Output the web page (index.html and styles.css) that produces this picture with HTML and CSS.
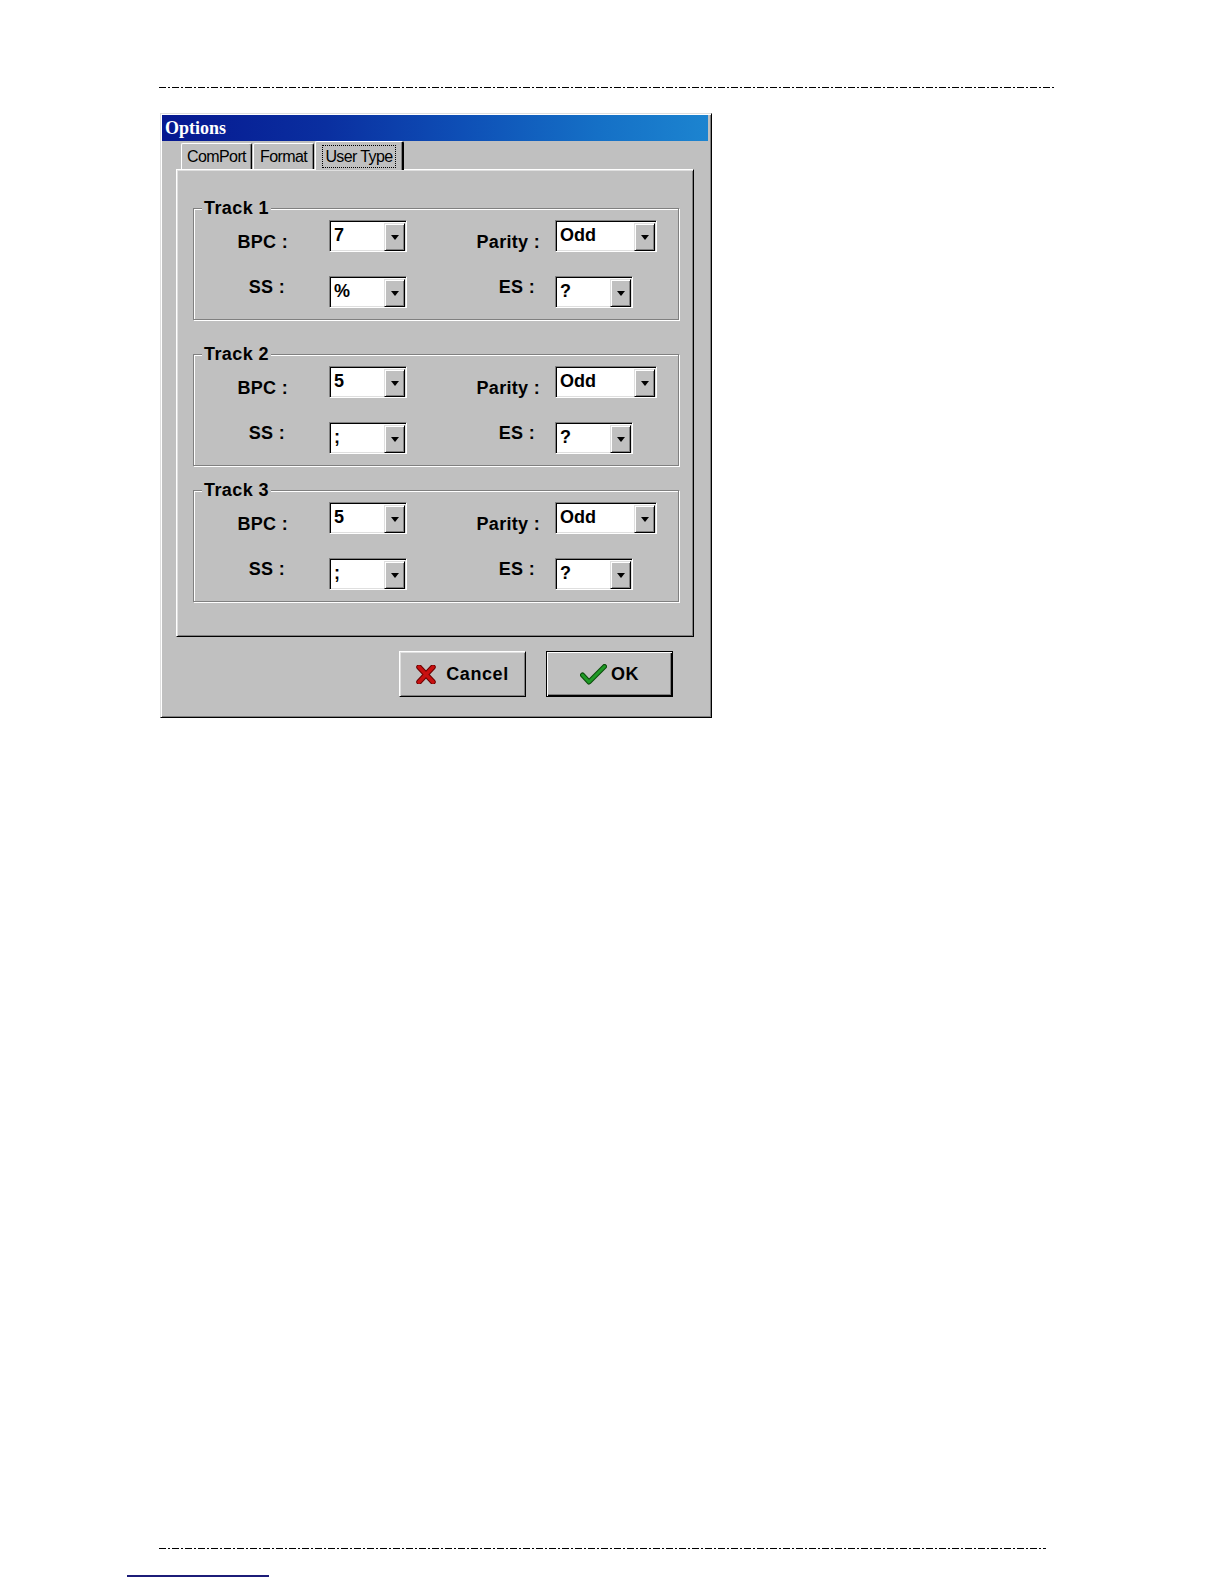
FILE: index.html
```html
<!DOCTYPE html>
<html>
<head>
<meta charset="utf-8">
<title>Options</title>
<link rel="stylesheet" href="styles.css">
</head>
<body>
<div class="page">
  <div class="rule rule-top"></div>

  <div class="dialog">
    <div class="titlebar">Options</div>

    <div class="tabs">
      <div class="tab tab-comport">ComPort</div>
      <div class="tab tab-format">Format</div>
      <div class="tab tab-user active"><span class="focus">User Type</span></div>
    </div>

    <div class="panel">
      <div class="group g1">
        <span class="legend">Track 1</span>
        <div class="fields">
          <div class="lbl lbl-a r1">BPC :</div>
          <div class="combo"><span class="val">7</span><span class="drop"><span class="arrow"></span></span></div>
          <div class="lbl lbl-b r1">Parity :</div>
          <div class="combo wide"><span class="val">Odd</span><span class="drop"><span class="arrow"></span></span></div>
          <div class="lbl lbl-a r2 ss">SS :</div>
          <div class="combo"><span class="val">%</span><span class="drop"><span class="arrow"></span></span></div>
          <div class="lbl lbl-b r2 es">ES :</div>
          <div class="combo"><span class="val">?</span><span class="drop"><span class="arrow"></span></span></div>
        </div>
      </div>

      <div class="group g2">
        <span class="legend">Track 2</span>
        <div class="fields">
          <div class="lbl lbl-a r1">BPC :</div>
          <div class="combo"><span class="val">5</span><span class="drop"><span class="arrow"></span></span></div>
          <div class="lbl lbl-b r1">Parity :</div>
          <div class="combo wide"><span class="val">Odd</span><span class="drop"><span class="arrow"></span></span></div>
          <div class="lbl lbl-a r2 ss">SS :</div>
          <div class="combo"><span class="val">;</span><span class="drop"><span class="arrow"></span></span></div>
          <div class="lbl lbl-b r2 es">ES :</div>
          <div class="combo"><span class="val">?</span><span class="drop"><span class="arrow"></span></span></div>
        </div>
      </div>

      <div class="group g3">
        <span class="legend">Track 3</span>
        <div class="fields">
          <div class="lbl lbl-a r1">BPC :</div>
          <div class="combo"><span class="val">5</span><span class="drop"><span class="arrow"></span></span></div>
          <div class="lbl lbl-b r1">Parity :</div>
          <div class="combo wide"><span class="val">Odd</span><span class="drop"><span class="arrow"></span></span></div>
          <div class="lbl lbl-a r2 ss">SS :</div>
          <div class="combo"><span class="val">;</span><span class="drop"><span class="arrow"></span></span></div>
          <div class="lbl lbl-b r2 es">ES :</div>
          <div class="combo"><span class="val">?</span><span class="drop"><span class="arrow"></span></span></div>
        </div>
      </div>
    </div>

    <div class="buttons">
      <div class="btn btn-cancel">
        <svg class="ico-x" width="20" height="19" viewBox="0 0 20 19">
          <path d="M3 2 L17 17 M17 2 L3 17" stroke="#6a0000" stroke-width="5.5" stroke-linecap="round"/>
          <path d="M3 2 L17 17 M17 2 L3 17" stroke="#c81010" stroke-width="3.5" stroke-linecap="round"/>
        </svg>
        <span>Cancel</span>
      </div>
      <div class="btn btn-ok">
        <svg class="ico-ok" width="27" height="21" viewBox="0 0 27 21">
          <path d="M2.5 11 L9 18 L24.5 2.5" fill="none" stroke="#0b4a0b" stroke-width="5" stroke-linecap="round" stroke-linejoin="round"/>
          <path d="M2.5 11 L9 18 L24.5 2.5" fill="none" stroke="#1f9a26" stroke-width="3" stroke-linecap="round" stroke-linejoin="round"/>
        </svg>
        <span>OK</span>
      </div>
    </div>
  </div>

  <div class="rule rule-bottom"></div>
  <div class="blueline"></div>
</div>
</body>
</html>
```

FILE: styles.css
```css
* { box-sizing: border-box; }

html, body {
  margin: 0;
  padding: 0;
  background: #ffffff;
}

body {
  font-family: "Liberation Sans", Arial, sans-serif;
  color: #000;
}

.page {
  width: 1224px;
  height: 1584px;
  padding-top: 87px;
  overflow: hidden;
}

.rule {
  height: 1px;
  margin-left: 159px;
  background: repeating-linear-gradient(to right,
    #000 0 7px, transparent 7px 9px, #000 9px 11px, transparent 11px 13px);
}

.rule-top { width: 896px; }

.rule-bottom {
  width: 887px;
  margin-top: 830px;
}

.blueline {
  width: 142px;
  height: 2px;
  margin: 26px 0 0 127px;
  background: #1c1c78;
}

/* dialog window */
.dialog {
  width: 552px;
  height: 605px;
  margin: 25px 0 0 160px;
  background: #c0c0c0;
  border: 1px solid;
  border-color: #dfdfdf #000 #000 #dfdfdf;
  box-shadow: inset 1px 1px #ffffff, inset -1px -1px #808080;
  padding: 1px 3px 0 1px;
}

.titlebar {
  height: 26px;
  padding-left: 3px;
  font-family: "Liberation Serif", "Times New Roman", serif;
  font-weight: bold;
  font-size: 18px;
  line-height: 26px;
  color: #fff;
  background: linear-gradient(to right, #061890 0%, #0a2fa0 30%, #0e4fb6 55%, #1570c6 80%, #1c84d0 100%);
}

/* tabs */
.tabs {
  display: flex;
  align-items: flex-end;
  height: 28px;
  padding-left: 19px;
  position: relative;
  z-index: 2;
}

.tab {
  height: 26px;
  border: 1px solid;
  border-color: #fff #000 transparent #fff;
  border-bottom: none;
  border-radius: 2px 2px 0 0;
  box-shadow: inset -1px 0 #808080;
  font-size: 16px;
  letter-spacing: -0.6px;
  line-height: 25px;
  text-align: center;
  color: #000;
  background: #c0c0c0;
}

.tab-comport { width: 71px; margin-right: 1px; }
.tab-format { width: 61px; margin-right: 1px; }

.tab-user {
  width: 89px;
  height: 29px;
  margin-bottom: -1px;
  padding-top: 2px;
  border-right-width: 2px;
}

.focus {
  display: inline-block;
  padding: 0 2px;
  height: 23px;
  line-height: 21px;
  border: 1px dotted #000;
}

/* tab panel */
.panel {
  width: 518px;
  height: 468px;
  margin-left: 14px;
  border: 1px solid;
  border-color: #fff #000 #000 #fff;
  box-shadow: inset 1px 1px #dfdfdf, inset -1px -1px #808080;
  padding: 38px 0 0 16px;
  position: relative;
  z-index: 1;
}

/* group boxes */
.group {
  position: relative;
  width: 486px;
  height: 112px;
  border: 1px solid #808080;
  box-shadow: inset 1px 1px #fff, 1px 1px #fff;
}

.g2 { margin-top: 34px; }
.g3 { margin-top: 24px; }

.legend {
  position: absolute;
  top: -12px;
  left: 8px;
  padding: 0 2px;
  background: #c0c0c0;
  font-weight: bold;
  font-size: 18px;
  letter-spacing: 0.4px;
  line-height: 22px;
}

.fields {
  display: grid;
  grid-template-columns: 135px 78px 148px auto;
  grid-template-rows: 32px 32px;
  row-gap: 24px;
  padding-top: 11px;
}

.lbl {
  font-weight: bold;
  font-size: 18px;
  letter-spacing: 0.3px;
  line-height: 20px;
  text-align: right;
  white-space: nowrap;
}

.lbl-a { padding-right: 41px; }
.lbl-b { padding-right: 15px; }
.lbl-a.ss { padding-right: 44px; }
.lbl-b.es { padding-right: 20px; }

.r1 { padding-top: 12px; }
.r2 { padding-top: 1px; }

/* combo boxes */
.combo {
  position: relative;
  display: flex;
  width: 78px;
  height: 32px;
  background: #fff;
  border: 1px solid;
  border-color: #808080 #fff #fff #808080;
  box-shadow: inset 1px 1px #000, inset -1px -1px #dfdfdf;
  padding: 1px;
}

.combo.wide { width: 102px; }

.val {
  flex: 1;
  padding: 3px 0 0 3px;
  font-weight: bold;
  font-size: 18px;
  line-height: 20px;
}

.drop {
  width: 21px;
  height: 28px;
  margin-top: 1px;
  background: #c0c0c0;
  border: 1px solid;
  border-color: #dfdfdf #000 #000 #dfdfdf;
  box-shadow: inset 1px 1px #fff, inset -1px -1px #808080;
  display: flex;
  align-items: center;
  justify-content: center;
}

.arrow {
  width: 0;
  height: 0;
  border-left: 4px solid transparent;
  border-right: 4px solid transparent;
  border-top: 5px solid #000;
}

/* buttons */
.buttons {
  display: flex;
  justify-content: flex-end;
  gap: 20px;
  margin-top: 14px;
  padding-right: 35px;
}

.btn {
  width: 127px;
  height: 46px;
  display: flex;
  align-items: center;
  justify-content: center;
  background: #c0c0c0;
  border: 1px solid;
  border-color: #fff #000 #000 #fff;
  box-shadow: inset 1px 1px #dfdfdf, inset -1px -1px #808080;
  font-weight: bold;
  font-size: 18px;
  letter-spacing: 0.6px;
}

.btn-cancel { gap: 10px; }
.btn-cancel svg { margin-top: 1px; }

.btn-ok {
  gap: 4px;
  border: 1px solid #000;
  box-shadow: inset 1px 1px #fff, inset -1px -1px #000, inset -2px -2px #808080;
}
```
